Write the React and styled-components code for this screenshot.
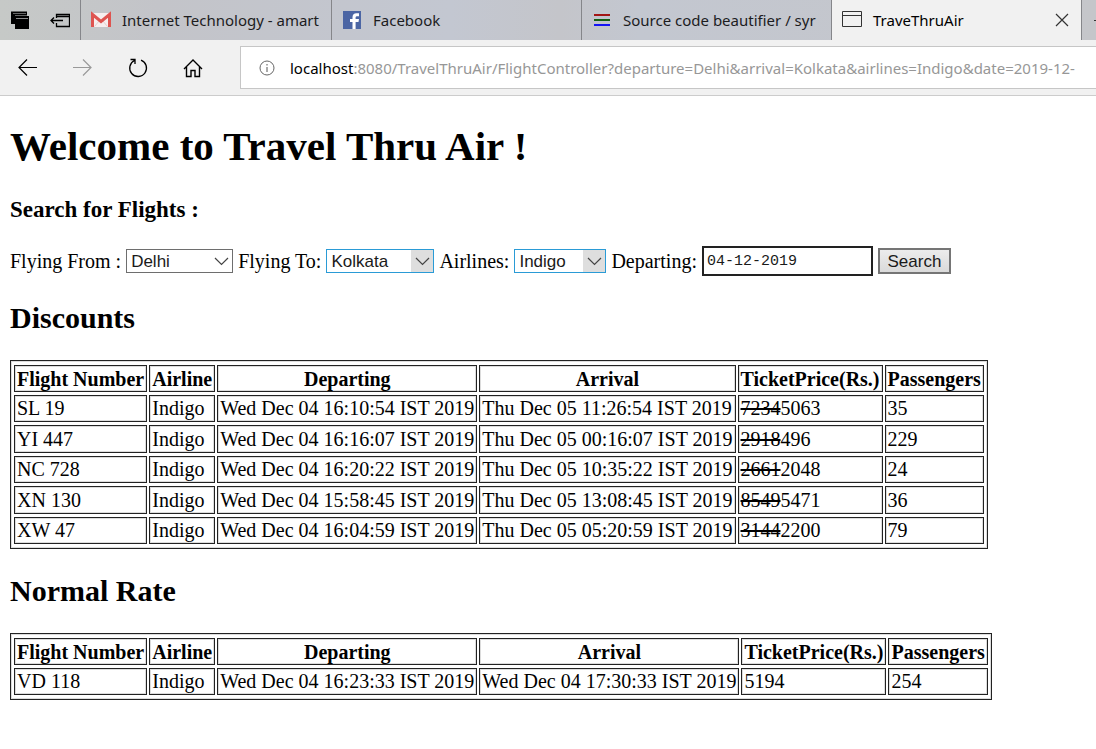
import React from "react";
import styled, { createGlobalStyle } from "styled-components";

const GlobalStyle = createGlobalStyle`
  *, *::before, *::after { box-sizing: border-box; }
  body {
    margin: 0;
    background: #fff;
    color: #000;
    font-family: "Liberation Serif", "Times New Roman", serif;
    font-size: 20px;
  }
`;

const uiFont = `"Noto Sans", "Segoe UI", sans-serif`;

const Browser = styled.div`
  overflow: hidden;
`;

const TabStrip = styled.div`
  display: flex;
  height: 40px;
  background: linear-gradient(90deg, #c6c9c7 0, #c3c4c9 160px, #c3c7d1 450px, #c4c5ca 560px, #c3c7d0 640px, #c5c6ca 100%);
  overflow: hidden;
`;

const TabTools = styled.div`
  display: flex;
  flex: none;
  align-items: center;
  gap: 20px;
  width: 80px;
  padding-left: 10px;
`;

const PlainButton = styled.button`
  display: flex;
  flex: none;
  padding: 0;
  border: 0;
  background: none;
  color: ${(p) => p.$color || "#000"};
`;

const Tab = styled.div`
  display: flex;
  flex: none;
  align-items: center;
  gap: 11px;
  width: 250px;
  padding: 0 12px 0 10px;
  border-left: 1px solid #85868a;
  background: ${(p) => (p.$active ? "#f1f1f1" : "transparent")};
  font: 15px/40px ${uiFont};
  color: ${(p) => (p.$active ? "#000" : "#1c1c1e")};

  &:nth-child(2) {
    width: 251px;
  }
`;

const TabTitle = styled.span`
  flex: 1;
  min-width: 0;
  white-space: nowrap;
`;

const Toolbar = styled.div`
  display: flex;
  align-items: center;
  height: 56px;
  padding-left: 17px;
  border-bottom: 1px solid #cccccc;
  background: #f1f1f1;
`;

const NavButtons = styled.nav`
  display: flex;
  flex: none;
  gap: 33px;
  width: 223px;
`;

const AddressBar = styled.div`
  display: flex;
  flex: 1;
  align-items: center;
  gap: 15px;
  min-width: 0;
  height: 43px;
  padding-left: 18px;
  border: 1px solid #c6c6c6;
  border-right: 0;
  background: #fff;
  overflow: hidden;
`;

const Address = styled.a`
  flex: none;
  font: 15px/24px ${uiFont};
  color: #979797;
  text-decoration: none;
  white-space: nowrap;
`;

const Host = styled.span`
  color: #000;
`;

const Page = styled.main`
  padding: 27px 10px;
`;

const Title = styled.h1`
  margin: 0 0 28px;
  font-size: 41px;
  line-height: 46px;
`;

const Subtitle = styled.h3`
  margin: 0 0 23px;
  font-size: 23px;
  line-height: 26px;
`;

const SectionTitle = styled.h2`
  margin: 25px 0;
  font-size: 30px;
  line-height: 34px;
`;

const SearchForm = styled.form`
  display: flex;
  align-items: center;
  gap: 5px;
  height: 30px;
  white-space: nowrap;
`;

const SelectBox = styled.span`
  display: grid;
  grid-template-columns: 1fr 22px;
  width: ${(p) => p.$width}px;
  height: 24px;
  border: 1px solid ${(p) => (p.$touched ? "#2a9bd6" : "#6e6e6e")};
  background: #fff;
`;

const Select = styled.select`
  grid-area: 1 / 1 / 2 / 3;
  appearance: none;
  width: 100%;
  padding: 1px 4px 0;
  border: 0;
  background: transparent;
  font: 17px/21px "Liberation Sans", Arial, sans-serif;
  color: #1a1a1a;
`;

const Arrow = styled.span`
  grid-area: 1 / 2;
  display: grid;
  place-items: center;
  background: ${(p) => (p.$touched ? "#dedede" : "transparent")};
  pointer-events: none;
`;

const DateInput = styled.input`
  width: 171px;
  height: 30px;
  padding: 0 3px;
  border: 2px solid #222;
  background: #fff;
  font: 15px/26px "Liberation Mono", Consolas, monospace;
  color: #1a1a1a;
`;

const SearchButton = styled.button`
  width: 73px;
  height: 26px;
  padding: 1px 0 0;
  border: 2px solid #757575;
  background: linear-gradient(#ececec, #dadada);
  font: 17px/21px "Liberation Sans", Arial, sans-serif;
  color: #1a1a1a;
`;

const FlightTable = styled.table`
  border: 1px solid #222;
  border-spacing: 2px 3px;
  padding: 1px;
  box-shadow: inset 0 0 0 1px #dcdcdc;
  white-space: nowrap;
`;

const cell = `
  height: 27px;
  padding: 1px 2px;
  border: 1px solid #222;
  box-shadow: inset 0 0 0 1px #dcdcdc;
  line-height: 23px;
`;

const HeadCell = styled.th`
  ${cell}
  padding: 2px 2px 0;
`;

const Cell = styled.td`
  ${cell}

  tr:nth-child(even) > & {
    height: 28px;
    padding-top: 2px;
  }
`;

const Icon = ({ size = 20, width = size, children }) => (
  <svg
    width={width}
    height={size}
    viewBox={`0 0 ${width} ${size}`}
    fill="none"
    stroke="currentColor"
    aria-hidden="true"
  >
    {children}
  </svg>
);

const TabsAsideIcon = () => (
  <Icon>
    <path d="M1 1.500h16v4H5V14H1z" fill="currentColor" stroke="none" />
    <path d="M5 6h14v13H5z" fill="currentColor" stroke="none" />
    <path d="M6 8.500h12" stroke="#8c8c8c" />
    <path d="M3 3.500h13" stroke="#666" />
  </Icon>
);

const SetAsideIcon = () => (
  <Icon>
    <path d="M6.500 8V4.500h13v12h-13V13M6.500 6.500h13M1 10.500h12M4 7.500l-3 3 3 3" strokeWidth="1.300" />
  </Icon>
);

const GmailIcon = () => (
  <Icon>
    <path d="M0 3h20v14H0z" fill="#f6eeee" stroke="none" />
    <path d="M3.500 16.500l5-6M16.500 16.500l-5-6" stroke="#e6cccc" />
    <path d="M1.500 17V4.500L10 11.500l8.500-7V17" stroke="#de5450" strokeWidth="3" />
  </Icon>
);

const FacebookIcon = () => (
  <Icon size={18} width={20}>
    <path d="M1 0h18v18H1z" fill="#4c66a4" stroke="none" />
    <path d="M10.500 18v-7H8V8h2.500V6.200C10.500 3.500 12 2.300 14.400 2.300H17v2.900h-1.700c-1.300 0-1.700.5-1.700 1.500V8H17l-.5 3h-2.900v7z" fill="#fff" stroke="none" />
  </Icon>
);

const BarsIcon = () => (
  <Icon>
    <path d="M2 5h16" stroke="#a31515" strokeWidth="2" />
    <path d="M2 10h16" stroke="#136013" strokeWidth="2" />
    <path d="M2 15h16" stroke="#1414f5" strokeWidth="2" />
  </Icon>
);

const WindowIcon = () => (
  <Icon>
    <path d="M.5 1.500h19v15H.5zM.5 5.500h19" stroke="#333" />
  </Icon>
);

const CloseIcon = () => (
  <Icon size={14}>
    <path d="M1 1l12 12M13 1L1 13" strokeWidth="1.200" />
  </Icon>
);

const PlusIcon = () => (
  <Icon>
    <path d="M2 10.500h16M10 2.500v16" />
  </Icon>
);

const BackIcon = () => (
  <Icon size={22}>
    <path d="M20 10.500H2M10 2.500l-8 8 8 8" strokeWidth="1.200" />
  </Icon>
);

const ForwardIcon = () => (
  <Icon size={22}>
    <path d="M1 10.500h18M11 2.500l8 8-8 8" strokeWidth="1.200" />
  </Icon>
);

const RefreshIcon = () => (
  <Icon size={22}>
    <path d="M14 3.200A8.400 8.400 0 1 1 7.500 3.500M3.500 2.500H8V7" strokeWidth="1.300" />
  </Icon>
);

const HomeIcon = () => (
  <Icon size={22}>
    <path d="M2 12L11 3l9 9M4.500 10v9.500H9v-6h4v6h4.500V10" strokeWidth="1.400" />
  </Icon>
);

const InfoIcon = () => (
  <Icon size={16}>
    <circle cx="8" cy="8" r="7" stroke="#666" />
    <path d="M8 7v5M8 4v1.500" stroke="#555" />
  </Icon>
);

const Chevron = () => (
  <svg width="15" height="9" viewBox="0 0 15 9" fill="none" stroke="#444" strokeWidth="1.200" aria-hidden="true">
    <path d="M1 1l6.500 6.500L14 1" />
  </svg>
);

const Field = ({ id, label, value, width, touched }) => (
  <>
    <label htmlFor={id}>{label}</label>
    <SelectBox $width={width} $touched={touched}>
      <Arrow $touched={touched}>
        <Chevron />
      </Arrow>
      <Select id={id} defaultValue={value}>
        <option>{value}</option>
      </Select>
    </SelectBox>
  </>
);

const headings = ["Flight Number", "Airline", "Departing", "Arrival", "TicketPrice(Rs.)", "Passengers"];

const discounts = [
  ["SL 19", "Wed Dec 04 16:10:54 IST 2019", "Thu Dec 05 11:26:54 IST 2019", "7234", "5063", 35],
  ["YI 447", "Wed Dec 04 16:16:07 IST 2019", "Thu Dec 05 00:16:07 IST 2019", "2918", "496", 229],
  ["NC 728", "Wed Dec 04 16:20:22 IST 2019", "Thu Dec 05 10:35:22 IST 2019", "2661", "2048", 24],
  ["XN 130", "Wed Dec 04 15:58:45 IST 2019", "Thu Dec 05 13:08:45 IST 2019", "8549", "5471", 36],
  ["XW 47", "Wed Dec 04 16:04:59 IST 2019", "Thu Dec 05 05:20:59 IST 2019", "3144", "2200", 79],
];

const normal = [["VD 118", "Wed Dec 04 16:23:33 IST 2019", "Wed Dec 04 17:30:33 IST 2019", "", "5194", 254]];

const Flights = ({ rows }) => (
  <FlightTable>
    <thead>
      <tr>
        {headings.map((h) => (
          <HeadCell key={h} scope="col">{h}</HeadCell>
        ))}
      </tr>
    </thead>
    <tbody>
      {rows.map(([number, departing, arrival, oldPrice, price, passengers]) => (
        <tr key={number}>
          <Cell>{number}</Cell>
          <Cell>Indigo</Cell>
          <Cell>{departing}</Cell>
          <Cell>{arrival}</Cell>
          <Cell>
            {oldPrice && <del>{oldPrice}</del>}
            {price}
          </Cell>
          <Cell>{passengers}</Cell>
        </tr>
      ))}
    </tbody>
  </FlightTable>
);

export default function App() {
  return (
    <Browser>
      <GlobalStyle />
      <TabStrip>
        <TabTools>
          <PlainButton aria-label="Tabs you've set aside"><TabsAsideIcon /></PlainButton>
          <PlainButton aria-label="Set these tabs aside"><SetAsideIcon /></PlainButton>
        </TabTools>
        <Tab>
          <GmailIcon />
          <TabTitle>Internet Technology - amart</TabTitle>
        </Tab>
        <Tab>
          <FacebookIcon />
          <TabTitle>Facebook</TabTitle>
        </Tab>
        <Tab>
          <BarsIcon />
          <TabTitle>Source code beautifier / syr</TabTitle>
        </Tab>
        <Tab $active>
          <WindowIcon />
          <TabTitle>TraveThruAir</TabTitle>
          <PlainButton $color="#333" aria-label="Close tab"><CloseIcon /></PlainButton>
        </Tab>
        <Tab>
          <PlainButton $color="#333" aria-label="New tab"><PlusIcon /></PlainButton>
        </Tab>
      </TabStrip>
      <Toolbar>
        <NavButtons>
          <PlainButton aria-label="Back"><BackIcon /></PlainButton>
          <PlainButton $color="#999" aria-label="Forward"><ForwardIcon /></PlainButton>
          <PlainButton aria-label="Refresh"><RefreshIcon /></PlainButton>
          <PlainButton aria-label="Home"><HomeIcon /></PlainButton>
        </NavButtons>
        <AddressBar>
          <InfoIcon />
          <Address href="#">
            <Host>localhost</Host>
            :8080/TravelThruAir/FlightController?departure=Delhi&amp;arrival=Kolkata&amp;airlines=Indigo&amp;date=2019-12-
          </Address>
        </AddressBar>
      </Toolbar>
      <Page>
        <Title>Welcome to Travel Thru Air !</Title>
        <Subtitle>Search for Flights :</Subtitle>
        <SearchForm>
          <Field id="from" label="Flying From :" value="Delhi" width={107} />
          <Field id="to" label="Flying To:" value="Kolkata" width={108} touched />
          <Field id="airline" label="Airlines:" value="Indigo" width={92} touched />
          <label htmlFor="date">Departing:</label>
          <DateInput id="date" type="text" defaultValue="04-12-2019" />
          <SearchButton type="button">Search</SearchButton>
        </SearchForm>
        <SectionTitle>Discounts</SectionTitle>
        <Flights rows={discounts} />
        <SectionTitle>Normal Rate</SectionTitle>
        <Flights rows={normal} />
      </Page>
    </Browser>
  );
}
